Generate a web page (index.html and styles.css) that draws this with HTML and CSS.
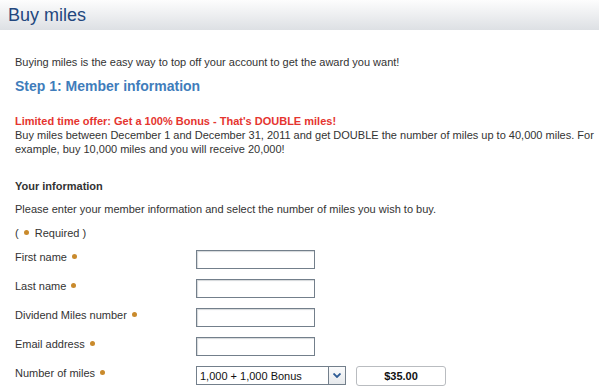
FILE: index.html
```html
<!DOCTYPE html>
<html lang="en">
<head>
<meta charset="utf-8">
<title>Buy miles</title>
<link rel="stylesheet" href="styles.css">
</head>
<body>
<header class="page-header">
  <h1 class="page-title">Buy miles</h1>
</header>
<main class="content">
  <p class="intro">Buying miles is the easy way to top off your account to get the award you want!</p>
  <h2 class="step-title">Step 1: Member information</h2>
  <div class="offer">
    <p class="offer-title">Limited time offer: Get a 100% Bonus - That's DOUBLE miles!</p>
    <p class="offer-text">Buy miles between December 1 and December 31, 2011 and get DOUBLE the number of miles up to 40,000 miles. For example, buy 10,000 miles and you will receive 20,000!</p>
  </div>
  <h3 class="section-title">Your information</h3>
  <p class="instructions">Please enter your member information and select the number of miles you wish to buy.</p>
  <p class="required-note">( <span class="dot"></span> Required )</p>
  <form class="form">
    <label class="label" for="fn">First name <span class="dot"></span></label>
    <input class="field" id="fn" type="text">
    <label class="label" for="ln">Last name <span class="dot"></span></label>
    <input class="field" id="ln" type="text">
    <label class="label" for="dm">Dividend Miles number <span class="dot"></span></label>
    <input class="field" id="dm" type="text">
    <label class="label" for="em">Email address <span class="dot"></span></label>
    <input class="field" id="em" type="text">
    <label class="label" for="nm">Number of miles <span class="dot"></span></label>
    <div class="miles-row">
      <div class="select-wrap">
        <select class="select" id="nm">
          <option>1,000 + 1,000 Bonus</option>
        </select>
        <span class="select-arrow"><svg width="8" height="5" viewBox="0 0 8 5"><path d="M0.5 0.5 L4 4 L7.5 0.5" fill="none" stroke="#2d5b95" stroke-width="1.8"/></svg></span>
      </div>
      <div class="price">$35.00</div>
    </div>
  </form>
</main>
</body>
</html>
```
FILE: styles.css
```css
* { box-sizing: border-box; }
html, body { margin: 0; padding: 0; background: #fff; }
body {
  font-family: "Liberation Sans", Arial, Helvetica, sans-serif;
  font-size: 11px;
  line-height: 14px;
  color: #333;
}
.page-header {
  height: 30px;
  background: linear-gradient(#fdfdfd, #dde0e4);
  padding-left: 8px;
}
.page-title {
  margin: 0;
  font-size: 18px;
  font-weight: normal;
  line-height: 30px;
  color: #23477e;
}
.content { padding: 0 4px 0 15px; }
p { margin: 0; }
.intro { margin-top: 25px; }
.step-title {
  margin: 9px 0 0;
  font-size: 14px;
  line-height: 17px;
  color: #3f7dbb;
}
.offer { margin-top: 19px; }
.offer-title { font-weight: bold; color: #e5352f; }
.section-title {
  margin: 23px 0 0;
  font-size: 11px;
  line-height: 14px;
}
.instructions { margin-top: 9px; }
.required-note { margin-top: 10px; }
.dot {
  display: inline-block;
  width: 5px;
  height: 5px;
  border-radius: 50%;
  background: #c98a2c;
  vertical-align: 2px;
  margin: 0 3px 0 2px;
}
.form {
  margin-top: 10px;
  display: grid;
  grid-template-columns: 181px auto;
  row-gap: 10px;
  align-items: start;
}
.label { line-height: 14px; }
.field {
  width: 119px;
  height: 19px;
  margin: 0;
  border: 1px solid #737f8b;
  box-shadow: inset 1px 1px 1px #d4d7da;
  background: #fff;
  font: inherit;
  padding: 0 3px;
}
.miles-row { display: flex; gap: 10px; }
.select-wrap { position: relative; width: 150px; height: 19px; }
.select {
  appearance: none;
  -webkit-appearance: none;
  width: 150px;
  height: 19px;
  margin: 0;
  border: 1px solid #737f8b;
  border-radius: 0;
  background: #fff;
  font: inherit;
  color: #111;
  padding: 0 0 0 3px;
}
.select-arrow {
  position: absolute;
  right: 0;
  top: 0;
  width: 18px;
  height: 19px;
  border: 1px solid #737f8b;
  background: linear-gradient(#fafbfc, #e6e9ec);
  display: flex;
  align-items: center;
  justify-content: center;
  pointer-events: none;
}
.price {
  width: 90px;
  height: 20px;
  border: 1px solid #b9bcc0;
  border-radius: 3px;
  background: #fff;
  font-weight: bold;
  color: #111;
  display: flex;
  align-items: center;
  justify-content: center;
}
```
